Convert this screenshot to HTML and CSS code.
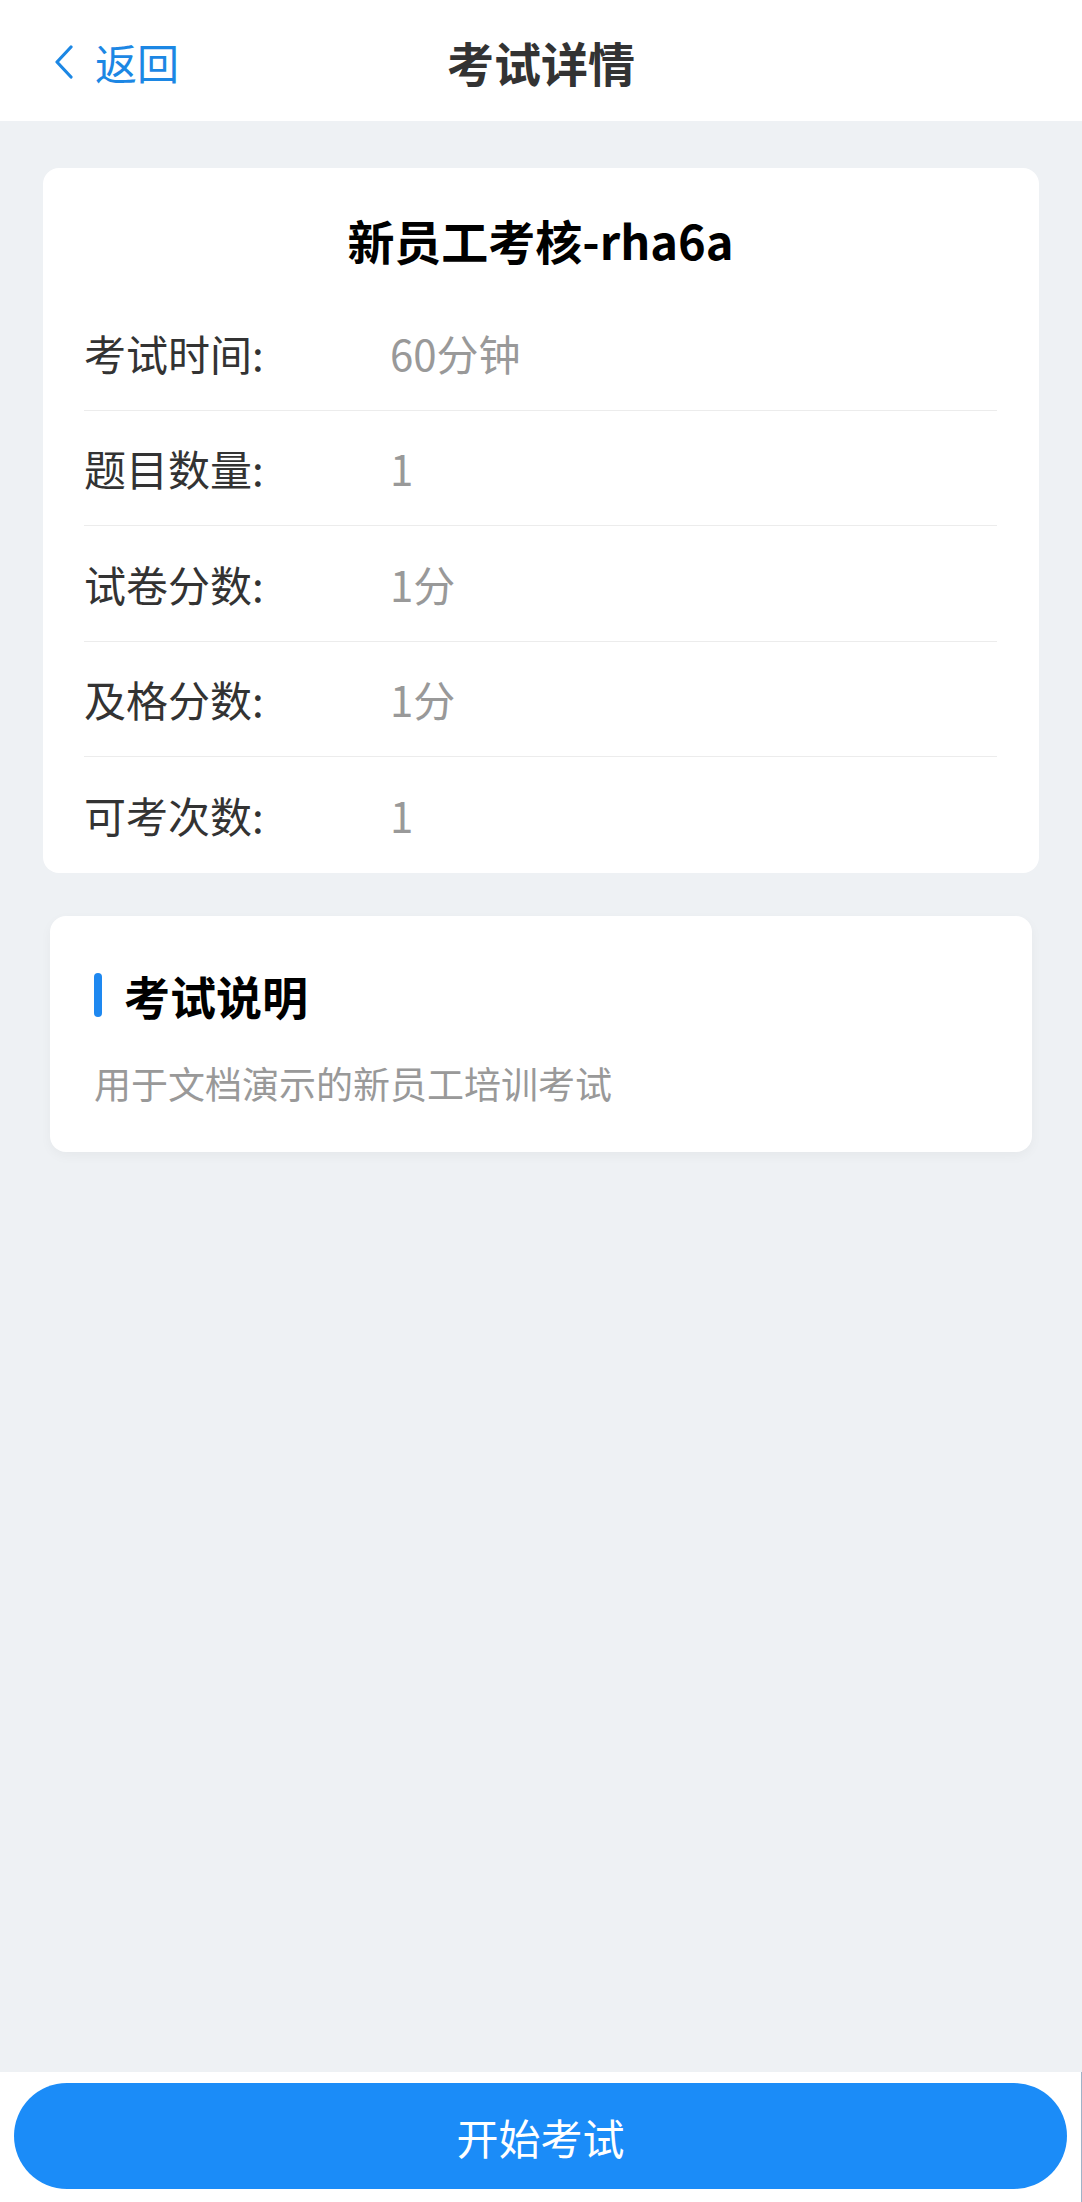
FILE: index.html
```html
<!DOCTYPE html>
<html lang="zh-CN">
<head>
    <meta charset="UTF-8">
    <meta name="viewport" content="width=device-width, initial-scale=1.0">
    <title>考试详情</title>
    <link rel="stylesheet" href="styles.css">
</head>
<body>
    <div class="page">
        <!-- 顶部导航 -->
        <header class="nav">
            <a class="back" href="#">
                <svg class="back-icon" width="20" height="34" viewBox="0 0 20 34">
                    <polyline points="17,2 3,17 17,32" fill="none" stroke="currentColor" stroke-width="3.2" stroke-linecap="round" stroke-linejoin="round"/>
                </svg>
                <span>返回</span>
            </a>
            <h1 class="nav-title">考试详情</h1>
            <span></span>
        </header>

        <main class="content">
            <!-- 考试信息 -->
            <section class="card info">
                <h2 class="exam-name">新员工考核-rha6a</h2>
                <div class="row"><span class="label">考试时间:</span><span class="value">60分钟</span></div>
                <div class="row"><span class="label">题目数量:</span><span class="value">1</span></div>
                <div class="row"><span class="label">试卷分数:</span><span class="value">1分</span></div>
                <div class="row"><span class="label">及格分数:</span><span class="value">1分</span></div>
                <div class="row"><span class="label">可考次数:</span><span class="value">1</span></div>
            </section>

            <!-- 考试说明 -->
            <section class="card desc">
                <h3 class="desc-title">考试说明</h3>
                <p class="desc-text">用于文档演示的新员工培训考试</p>
            </section>
        </main>

        <footer class="bottom">
            <button class="start">开始考试</button>
        </footer>
    </div>
</body>
</html>
```

FILE: styles.css
```css
* {
    box-sizing: border-box;
}
body {
    margin: 0;
    font-family: "Noto Sans CJK SC", "Noto Sans", sans-serif;
    background-color: #eef1f4;
}
.page {
    min-height: 100vh;
    display: flex;
    flex-direction: column;
}
.nav {
    height: 121px;
    background-color: #fff;
    display: grid;
    grid-template-columns: 1fr auto 1fr;
    align-items: center;
    padding: 2px 54px 0;
}
.back {
    display: flex;
    align-items: center;
    gap: 21px;
    color: #1c87e4;
    text-decoration: none;
    font-size: 42px;
    line-height: 1;
}
.back-icon {
    display: block;
}
.nav-title {
    margin: 0;
    font-size: 47px;
    font-weight: bold;
    color: #333;
    line-height: 1;
}
.content {
    flex: 1;
    padding: 47px 43px 0;
}
.card {
    background-color: #fff;
    border-radius: 16px;
}
.info {
    padding: 0 42px 0 41px;
}
.exam-name {
    margin: 0;
    padding: 38px 0 21px;
    text-align: center;
    font-size: 47px;
    line-height: 68px;
    font-weight: bold;
    color: #000;
}
.row {
    display: flex;
    align-items: center;
    height: 115.5px;
    border-bottom: 1px solid #ececec;
    font-size: 42px;
}
.row:last-child {
    border-bottom: none;
}
.label {
    width: 306px;
    color: #333;
}
.value {
    color: #999;
}
.desc {
    margin: 43px 7px 0;
    padding: 47px 44px 43px;
    box-shadow: 0 4px 12px rgba(0, 0, 0, 0.04);
}
.desc-title {
    margin: 0;
    display: flex;
    align-items: center;
    gap: 22px;
    font-size: 46px;
    line-height: 64px;
    font-weight: bold;
    color: #000;
}
.desc-title::before {
    content: "";
    width: 8px;
    height: 44px;
    border-radius: 4px;
    background-color: #1e88f0;
}
.desc-text {
    margin: 30px 0 0;
    font-size: 37px;
    line-height: 52px;
    color: #999;
}
.bottom {
    background-color: #fff;
    padding: 11px 14px 13px;
    border-right: 1px solid #9fb3c8;
}
.start {
    display: block;
    width: 100%;
    height: 106px;
    border: none;
    border-radius: 53px;
    background-color: #1b8cf8;
    color: #fff;
    font-family: inherit;
    font-size: 42px;
    cursor: pointer;
}
```
